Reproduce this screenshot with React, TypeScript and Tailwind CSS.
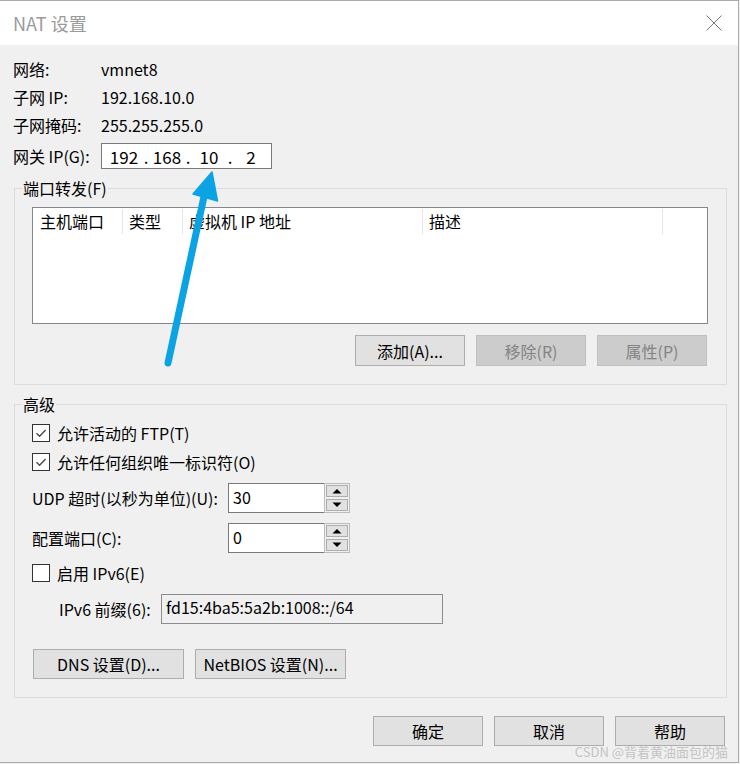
import React from "react";

function Check({ checked }: { checked: boolean }) {
  return (
    <div className="w-[18px] h-[18px] border border-[#333333] bg-white flex items-center justify-center shrink-0">
      {checked && (
        <svg width="16" height="16" viewBox="0 0 16 16">
          <path d="M3.5 8.2L6.6 11.2L12.6 5" fill="none" stroke="#4a4a4a" strokeWidth="1.4" />
        </svg>
      )}
    </div>
  );
}

function Spin({ value }: { value: string }) {
  return (
    <div className="w-[122px] h-[30px] flex">
      <div className="w-[96px] h-full border border-r-0 border-[#7a7a7a] bg-white pl-[4px] pt-[1px] leading-[24px]">
        {value}
      </div>
      <div className="w-[26px] h-full border border-[#bcbcbc] bg-[#f0f0f0] flex flex-col justify-between p-[1px]">
        <div className="h-[12px] border border-[#adadad] bg-[#e1e1e1] flex items-center justify-center">
          <svg width="10" height="6" viewBox="0 0 10 6">
            <path d="M0.5 5.5L5 1L9.5 5.5Z" fill="#000" />
          </svg>
        </div>
        <div className="h-[12px] border border-[#adadad] bg-[#e1e1e1] flex items-center justify-center">
          <svg width="10" height="6" viewBox="0 0 10 6">
            <path d="M0.5 0.5L5 5L9.5 0.5Z" fill="#000" />
          </svg>
        </div>
      </div>
    </div>
  );
}

export default function App() {
  return (
    <div className="w-[740px] h-[764px] bg-[#f0f0f0] font-['Noto_Sans_CJK_SC',sans-serif] text-[16px] text-black relative overflow-hidden">
      <div className="w-[739px] h-[763px] border-t border-r border-b border-[#ababab] flex flex-col">
        {/* Title bar */}
        <div className="h-[44px] bg-white flex items-center justify-between pl-[13px] pr-[16px] shrink-0">
          <span className="text-[18px] text-[#9a9a9a] leading-none">NAT 设置</span>
          <svg width="16" height="16" viewBox="0 0 16 16">
            <path d="M0.5 0.5L15.5 15.5M15.5 0.5L0.5 15.5" stroke="#7a7a7a" strokeWidth="1" />
          </svg>
        </div>

        {/* Body */}
        <div className="flex-1 flex flex-col pl-[13px]">
          <div className="pt-[10px] flex flex-col">
            <div className="h-[28px] flex items-center">
              <span className="w-[88px]">网络:</span>
              <span>vmnet8</span>
            </div>
            <div className="h-[28px] flex items-center">
              <span className="w-[88px]">子网 IP:</span>
              <span>192.168.10.0</span>
            </div>
            <div className="h-[28px] flex items-center">
              <span className="w-[88px]">子网掩码:</span>
              <span>255.255.255.0</span>
            </div>
            <div className="mt-[4px] h-[26px] flex items-center">
              <span className="w-[88px]">网关 IP(G):</span>
              <div className="w-[171px] h-[26px] border border-[#7a7a7a] bg-white flex items-center pl-[6px] text-[17px] leading-none">
                <span className="w-[32px] text-center">192</span>
                <span className="w-[12px] text-center">.</span>
                <span className="w-[30px] text-center">168</span>
                <span className="w-[12px] text-center">.</span>
                <span className="w-[30px] text-center">10</span>
                <span className="w-[12px] text-center">.</span>
                <span className="w-[30px] text-center">2</span>
              </div>
            </div>
          </div>

          {/* Port forwarding */}
          <fieldset className="mt-[9px] ml-[1px] w-[713px] border border-[#dcdcdc] pl-[7px] pb-[18px]">
            <legend className="h-[20px] leading-[20px] px-[1px]">端口转发(F)</legend>
            <div className="pl-[10px] pt-[9px]">
              <div className="w-[676px] h-[117px] border border-[#828790] bg-white">
                <div className="h-[26px] flex items-stretch pt-[1px] leading-[24px]">
                  <div className="w-[90px] border-r border-[#e5e5e5] pl-[7px]">主机端口</div>
                  <div className="w-[60px] border-r border-[#e5e5e5] pl-[6px]">类型</div>
                  <div className="w-[240px] border-r border-[#e5e5e5] pl-[6px]">虚拟机 IP 地址</div>
                  <div className="w-[240px] border-r border-[#e5e5e5] pl-[6px]">描述</div>
                </div>
              </div>
              <div className="w-[676px] mt-[11px] flex justify-end gap-[11px] pr-[1px]">
                <div className="w-[110px] h-[31px] border border-[#adadad] bg-[#e1e1e1] flex items-center justify-center">
                  添加(A)...
                </div>
                <div className="w-[110px] h-[31px] border border-[#bfbfbf] bg-[#cccccc] text-[#838383] flex items-center justify-center">
                  移除(R)
                </div>
                <div className="w-[110px] h-[31px] border border-[#bfbfbf] bg-[#cccccc] text-[#838383] flex items-center justify-center">
                  属性(P)
                </div>
              </div>
            </div>
          </fieldset>

          {/* Advanced */}
          <fieldset className="mt-[9px] ml-[1px] w-[713px] border border-[#dcdcdc] pl-[7px] pb-[18px]">
            <legend className="h-[20px] leading-[20px] px-[1px]">高级</legend>
            <div className="pl-[10px] pt-[9px] flex flex-col">
              <div className="h-[20px] flex items-center gap-[7px]">
                <Check checked />
                <span>允许活动的 FTP(T)</span>
              </div>
              <div className="mt-[9px] h-[20px] flex items-center gap-[7px]">
                <Check checked />
                <span>允许任何组织唯一标识符(O)</span>
              </div>
              <div className="mt-[11px] h-[30px] flex items-center">
                <span className="w-[196px]">UDP 超时(以秒为单位)(U):</span>
                <Spin value="30" />
              </div>
              <div className="mt-[10px] h-[30px] flex items-center">
                <span className="w-[196px]">配置端口(C):</span>
                <Spin value="0" />
              </div>
              <div className="mt-[10px] h-[20px] flex items-center gap-[7px]">
                <Check checked={false} />
                <span>启用 IPv6(E)</span>
              </div>
              <div className="mt-[11px] h-[30px] flex items-center pl-[27px]">
                <span className="w-[102px]">IPv6 前缀(6):</span>
                <div className="w-[282px] h-[30px] border border-[#8c8c8c] bg-[#f0f0f0] pl-[4px] leading-[24px]">
                  fd15:4ba5:5a2b:1008::/64
                </div>
              </div>
              <div className="mt-[25px] flex gap-[11px] pl-[1px]">
                <div className="w-[151px] h-[30px] border border-[#adadad] bg-[#e1e1e1] flex items-center justify-center">
                  DNS 设置(D)...
                </div>
                <div className="w-[151px] h-[30px] border border-[#adadad] bg-[#e1e1e1] flex items-center justify-center">
                  NetBIOS 设置(N)...
                </div>
              </div>
            </div>
          </fieldset>

          {/* Dialog buttons */}
          <div className="mt-[18px] flex justify-end gap-[11px] pr-[13px]">
            <div className="w-[110px] h-[30px] border border-[#adadad] bg-[#e1e1e1] flex items-center justify-center">
              确定
            </div>
            <div className="w-[110px] h-[30px] border border-[#adadad] bg-[#e1e1e1] flex items-center justify-center">
              取消
            </div>
            <div className="w-[110px] h-[30px] border border-[#adadad] bg-[#e1e1e1] flex items-center justify-center">
              帮助
            </div>
          </div>
        </div>
      </div>

      {/* Annotation arrow */}
      <svg className="absolute left-0 top-0 pointer-events-none" width="740" height="764" viewBox="0 0 740 764">
        <path d="M168 363L205 192" stroke="#0ba3e3" strokeWidth="7" strokeLinecap="round" fill="none" />
        <path d="M212 172L193 194L217.5 201Z" fill="#0ba3e3" stroke="#0ba3e3" strokeWidth="1.5" strokeLinejoin="round" />
      </svg>

      {/* Watermark */}
      <div className="absolute right-[12px] top-[743px] text-[13px] leading-[18px] text-[#c4c4c4] whitespace-nowrap">
        CSDN @背着黄油面包的猫
      </div>
    </div>
  );
}
